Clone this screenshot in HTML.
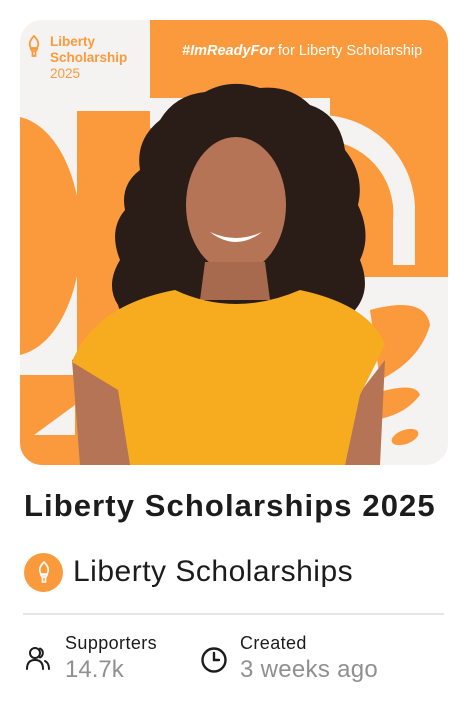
<!DOCTYPE html>
<html><head><meta charset="utf-8"><style>
*{margin:0;padding:0;box-sizing:border-box}
body{width:466px;height:713px;background:#fff;font-family:"Liberation Sans",sans-serif;position:relative;overflow:hidden;color:#1c1c1c}
.card{position:absolute;left:20px;top:20px;width:428px;height:445px;border-radius:22px;overflow:hidden;background:#f4f3f1}
.t{position:absolute;white-space:nowrap}
</style></head><body>
<div class="card">
<svg width="428" height="445" viewBox="20 20 428 445" style="position:absolute;left:0;top:0">
<g fill="#fb9a3c">
<rect x="150" y="20" width="298" height="78"/>
<path d="M20 117 A70 120 0 0 1 20 355 Z"/>
<path d="M77 111 L77 465 L150 465 L150 111 Z"/>
<path d="M77 111 Q200 110 200 240 L150 340 Z"/>
<path d="M330 98 L448 98 L448 277 L330 277 Z"/>
<path d="M20 375 L80 375 L80 465 L20 465 Z"/>
<path d="M370 310 Q425 295 430 325 Q420 360 380 380 Z"/>
<path d="M370 395 Q415 380 420 395 Q405 415 375 420 Z"/>
<ellipse cx="405" cy="437" rx="14" ry="7" transform="rotate(-20 405 437)"/>
</g>
<path d="M320 115 A95 95 0 0 1 415 210 L415 265 L393 265 L393 220 A73 73 0 0 0 320 140 Z" fill="#f4f3f1"/>
<path d="M34 435 L75 405 L75 435 Z" fill="#f4f3f1"/>
<path d="M150 98 L330 98 L330 110 L150 110 Z" fill="#f4f3f1"/>
<!-- hair -->
<path d="M140 170 Q135 140 160 120 Q175 95 205 92 Q230 78 260 88 Q290 85 310 105 Q340 115 345 150 Q365 175 358 205 Q372 235 360 260 Q372 290 355 310 Q345 330 320 320 L150 320 Q125 330 118 305 Q105 285 120 260 Q108 230 125 210 Q120 185 140 170 Z" fill="#2a1d18"/>
<ellipse cx="236" cy="205" rx="50" ry="68" fill="#b47455"/>
<path d="M205 262 L265 262 L270 300 L200 300 Z" fill="#a86a4e"/>
<path d="M210 232 Q236 252 262 232 Q236 244 210 232 Z" fill="#fff"/>
<!-- body -->
<path d="M72 360 L100 345 L130 390 L130 465 L80 465 Z" fill="#b47455"/>
<path d="M358 395 L385 360 L380 465 L345 465 Z" fill="#b47455"/>
<path d="M72 362 Q95 305 175 290 Q235 318 300 290 Q370 305 385 345 L360 395 L345 465 L130 465 L118 390 Z" fill="#f7ab1e"/>
</svg>
<svg width="14" height="22" style="position:absolute;left:7px;top:15px" viewBox="0 0 14 22"><path d="M7 1 C2 6 2 10 4 13 L10 13 C12 10 12 6 7 1 Z M4 14 L10 14 L9 16 L5 16 Z M5.5 16 L5.5 21 L8.5 21 L8.5 16" fill="none" stroke="#fb9a3c" stroke-width="1.8"/></svg>
<div class="t" style="left:30px;top:14px;color:#fb9a3c;font-size:13.5px;line-height:16px;font-weight:bold">Liberty<br>Scholarship<br><span style="font-weight:normal">2025</span></div>
<div class="t" style="left:162px;top:23px;color:#fff;font-size:14.5px"><b><i>#ImReadyFor</i></b> for Liberty Scholarship</div>
</div>
<div class="t" style="left:24px;top:488px;font-size:31px;font-weight:bold;letter-spacing:1.1px">Liberty Scholarships 2025</div>
<div style="position:absolute;left:24px;top:553px;width:39px;height:39px;border-radius:50%;background:#fb9a3c"></div>
<svg width="14" height="22" style="position:absolute;left:36.5px;top:561px" viewBox="0 0 14 22"><path d="M7 1 C2 6 2 10 4 13 L10 13 C12 10 12 6 7 1 Z M4 14 L10 14 L9 16 L5 16 Z M5.5 16 L5.5 21 L8.5 21 L8.5 16" fill="none" stroke="#fff" stroke-width="1.6"/></svg>
<div class="t" style="left:73px;top:555px;font-size:30px;letter-spacing:0.5px">Liberty Scholarships</div>
<div style="position:absolute;left:23px;top:613px;width:421px;height:2px;background:#e6e6e6"></div>
<svg width="26" height="26" style="position:absolute;left:25px;top:645px" viewBox="0 0 26 26" fill="none" stroke="#1c1c1c" stroke-width="2" stroke-linecap="round"><circle cx="10" cy="8" r="5"/><path d="M2 24 Q2 15 10 15 Q18 15 18 24"/><path d="M15 3.5 A5 5 0 0 1 15 12.5"/><path d="M20 16 Q24 18 24 24"/></svg>
<div class="t" style="left:65px;top:633px;font-size:18px;letter-spacing:0.4px">Supporters</div>
<div class="t" style="left:65px;top:656px;font-size:24px;color:#909090">14.7k</div>
<svg width="28" height="28" style="position:absolute;left:200px;top:646px" viewBox="0 0 28 28" fill="none" stroke="#1c1c1c" stroke-width="2.4" stroke-linecap="round"><circle cx="14" cy="14" r="11.5"/><path d="M14 7 L14 14 L19 14"/></svg>
<div class="t" style="left:240px;top:633px;font-size:18px;letter-spacing:0.4px">Created</div>
<div class="t" style="left:240px;top:656px;font-size:24px;color:#909090;letter-spacing:0.3px">3 weeks ago</div>
</body></html>
